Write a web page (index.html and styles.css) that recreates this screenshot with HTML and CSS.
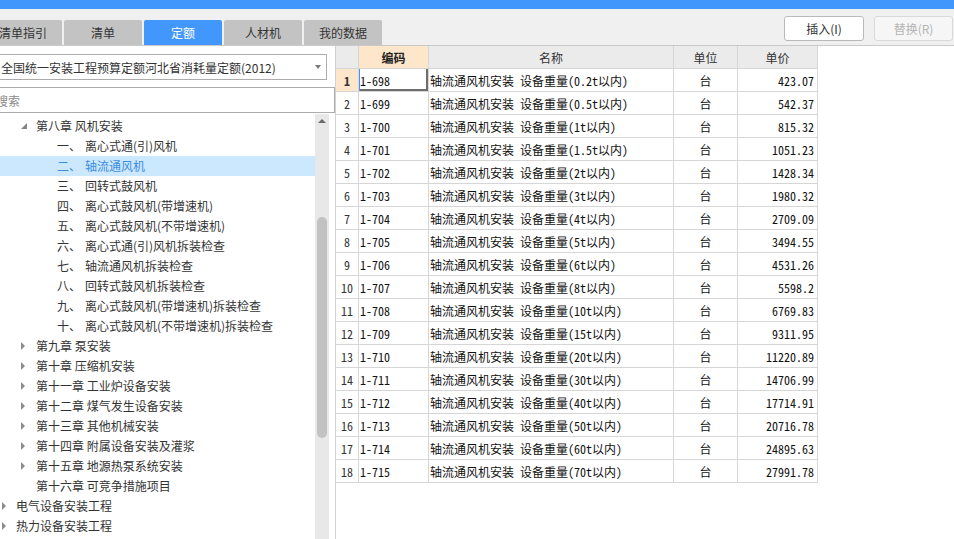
FILE: index.html
```html
<!DOCTYPE html>
<html lang="zh">
<head>
<meta charset="utf-8">
<title>定额</title>
<link rel="stylesheet" href="styles.css">
</head>
<body>
<div class="titlebar"></div>
<div class="toolbar">
  <div class="tabs">
    <div class="tab">清单指引</div>
    <div class="tab">清单</div>
    <div class="tab active">定额</div>
    <div class="tab">人材机</div>
    <div class="tab">我的数据</div>
  </div>
  <div class="actions">
    <button class="btn">插入(I)</button>
    <button class="btn disabled">替换(R)</button>
  </div>
</div>
<div class="main">
  <div class="left">
    <div class="combo"><span class="combo-text">全国统一安装工程预算定额河北省消耗量定额(2012)</span><span class="caret"></span></div>
    <input class="search" placeholder="搜索">
    <div class="treewrap">
      <div class="tree">
        <div class="node l1"><span class="exp"></span><span>第八章 风机安装</span></div>
        <div class="node l2"><span class="num">一、</span><span>离心式通(引)风机</span></div>
        <div class="node l2 sel"><span class="num">二、</span><span>轴流通风机</span></div>
        <div class="node l2"><span class="num">三、</span><span>回转式鼓风机</span></div>
        <div class="node l2"><span class="num">四、</span><span>离心式鼓风机(带增速机)</span></div>
        <div class="node l2"><span class="num">五、</span><span>离心式鼓风机(不带增速机)</span></div>
        <div class="node l2"><span class="num">六、</span><span>离心式通(引)风机拆装检查</span></div>
        <div class="node l2"><span class="num">七、</span><span>轴流通风机拆装检查</span></div>
        <div class="node l2"><span class="num">八、</span><span>回转式鼓风机拆装检查</span></div>
        <div class="node l2"><span class="num">九、</span><span>离心式鼓风机(带增速机)拆装检查</span></div>
        <div class="node l2"><span class="num">十、</span><span>离心式鼓风机(不带增速机)拆装检查</span></div>
        <div class="node l1"><span class="col"></span><span>第九章 泵安装</span></div>
        <div class="node l1"><span class="col"></span><span>第十章 压缩机安装</span></div>
        <div class="node l1"><span class="col"></span><span>第十一章 工业炉设备安装</span></div>
        <div class="node l1"><span class="col"></span><span>第十二章 煤气发生设备安装</span></div>
        <div class="node l1"><span class="col"></span><span>第十三章 其他机械安装</span></div>
        <div class="node l1"><span class="col"></span><span>第十四章 附属设备安装及灌浆</span></div>
        <div class="node l1"><span class="col"></span><span>第十五章 地源热泵系统安装</span></div>
        <div class="node l1"><span class="none"></span><span>第十六章 可竞争措施项目</span></div>
        <div class="node l0"><span class="col"></span><span>电气设备安装工程</span></div>
        <div class="node l0"><span class="col"></span><span>热力设备安装工程</span></div>
      </div>
      <div class="vscroll"><span class="up"></span><span class="thumb"></span></div>
    </div>
  </div>
  <div class="right">
    <table class="grid">
      <colgroup><col class="c-idx"><col class="c-code"><col class="c-name"><col class="c-unit"><col class="c-price"></colgroup>
      <thead>
        <tr><th class="idx"></th><th class="hl">编码</th><th>名称</th><th>单位</th><th>单价</th></tr>
      </thead>
      <tbody>
        <tr><td class="idx hl">1</td><td class="code focus">1-698</td><td>轴流通风机安装 设备重量(0.2t以内)</td><td class="unit">台</td><td class="price">423.07</td></tr>
        <tr><td class="idx">2</td><td class="code">1-699</td><td>轴流通风机安装 设备重量(0.5t以内)</td><td class="unit">台</td><td class="price">542.37</td></tr>
        <tr><td class="idx">3</td><td class="code">1-700</td><td>轴流通风机安装 设备重量(1t以内)</td><td class="unit">台</td><td class="price">815.32</td></tr>
        <tr><td class="idx">4</td><td class="code">1-701</td><td>轴流通风机安装 设备重量(1.5t以内)</td><td class="unit">台</td><td class="price">1051.23</td></tr>
        <tr><td class="idx">5</td><td class="code">1-702</td><td>轴流通风机安装 设备重量(2t以内)</td><td class="unit">台</td><td class="price">1428.34</td></tr>
        <tr><td class="idx">6</td><td class="code">1-703</td><td>轴流通风机安装 设备重量(3t以内)</td><td class="unit">台</td><td class="price">1980.32</td></tr>
        <tr><td class="idx">7</td><td class="code">1-704</td><td>轴流通风机安装 设备重量(4t以内)</td><td class="unit">台</td><td class="price">2709.09</td></tr>
        <tr><td class="idx">8</td><td class="code">1-705</td><td>轴流通风机安装 设备重量(5t以内)</td><td class="unit">台</td><td class="price">3494.55</td></tr>
        <tr><td class="idx">9</td><td class="code">1-706</td><td>轴流通风机安装 设备重量(6t以内)</td><td class="unit">台</td><td class="price">4531.26</td></tr>
        <tr><td class="idx">10</td><td class="code">1-707</td><td>轴流通风机安装 设备重量(8t以内)</td><td class="unit">台</td><td class="price">5598.2</td></tr>
        <tr><td class="idx">11</td><td class="code">1-708</td><td>轴流通风机安装 设备重量(10t以内)</td><td class="unit">台</td><td class="price">6769.83</td></tr>
        <tr><td class="idx">12</td><td class="code">1-709</td><td>轴流通风机安装 设备重量(15t以内)</td><td class="unit">台</td><td class="price">9311.95</td></tr>
        <tr><td class="idx">13</td><td class="code">1-710</td><td>轴流通风机安装 设备重量(20t以内)</td><td class="unit">台</td><td class="price">11220.89</td></tr>
        <tr><td class="idx">14</td><td class="code">1-711</td><td>轴流通风机安装 设备重量(30t以内)</td><td class="unit">台</td><td class="price">14706.99</td></tr>
        <tr><td class="idx">15</td><td class="code">1-712</td><td>轴流通风机安装 设备重量(40t以内)</td><td class="unit">台</td><td class="price">17714.91</td></tr>
        <tr><td class="idx">16</td><td class="code">1-713</td><td>轴流通风机安装 设备重量(50t以内)</td><td class="unit">台</td><td class="price">20716.78</td></tr>
        <tr><td class="idx">17</td><td class="code">1-714</td><td>轴流通风机安装 设备重量(60t以内)</td><td class="unit">台</td><td class="price">24895.63</td></tr>
        <tr><td class="idx">18</td><td class="code">1-715</td><td>轴流通风机安装 设备重量(70t以内)</td><td class="unit">台</td><td class="price">27991.78</td></tr>
      </tbody>
    </table>
  </div>
</div>
</body>
</html>
```
FILE: styles.css
```css
* { box-sizing: border-box; }
html, body {
  margin: 0;
  padding: 0;
}
body {
  width: 954px;
  height: 539px;
  overflow: hidden;
  background: #f0f0f0;
  font-family: "Noto Sans CJK SC", "Noto Sans", sans-serif;
  font-size: 12px;
  color: #333;
}
.titlebar {
  height: 9px;
  background: #4197fc;
}
.toolbar {
  height: 36px;
  display: flex;
  justify-content: space-between;
}
.tabs {
  display: flex;
  align-self: flex-end;
  gap: 2px;
  margin-left: -16px;
}
.tab {
  width: 78px;
  height: 25px;
  line-height: 25px;
  text-align: center;
  background: #c3c3c3;
  border-radius: 2px 2px 0 0;
  color: #333;
}
.tab.active {
  background: #4197fc;
  color: #fff;
}
.actions {
  display: flex;
  gap: 10px;
  margin-top: 7px;
  padding-right: 1px;
  align-self: flex-start;
}
.btn {
  width: 80px;
  height: 25px;
  padding: 0;
  font-family: inherit;
  font-size: 12px;
  color: #333;
  background: #fff;
  border: 1px solid #b9b9b9;
  border-radius: 3px;
}
.btn.disabled {
  width: 79px;
  color: #b4b4b4;
  background: #f6f6f6;
  border-color: #d9d9d9;
}
.main {
  height: 494px;
  display: flex;
  border-top: 1px solid #c9c9c9;
}
.left {
  width: 335px;
  background: #fff;
  display: flex;
  flex-direction: column;
}
.combo {
  height: 26px;
  margin: 8px 8px 0 -4px;
  padding: 0 5px 0 4px;
  border: 1px solid #acacac;
  display: flex;
  align-items: center;
  white-space: nowrap;
}
.caret {
  margin-left: auto;
  width: 0;
  height: 0;
  border-top: 4px solid #7a7a7a;
  border-left: 3px solid transparent;
  border-right: 3px solid transparent;
}
.search {
  display: block;
  height: 26px;
  width: 344px;
  margin: 7px 0 0 -9px;
  padding: 0 4px;
  border: 1px solid #acacac;
  font-family: inherit;
  font-size: 12px;
  outline: none;
}
.search::placeholder { color: #8a8a8a; }
.treewrap {
  flex: 1;
  display: flex;
  margin-top: 1px;
  min-height: 0;
}
.tree {
  flex: 1;
  padding-top: 2px;
  white-space: nowrap;
  overflow: hidden;
}
.node {
  height: 20px;
  line-height: 20px;
  display: flex;
  align-items: center;
}
.node.l0 { padding-left: 1px; }
.node.l1 { padding-left: 20px; }
.node.l2 { padding-left: 57px; }
.node.sel {
  background: #cce8ff;
  color: #3b8de0;
}
.num { width: 28px; }
.exp, .col, .none {
  width: 16px;
  height: 20px;
  position: relative;
}
.l0 .exp, .l0 .col { width: 15px; }
.exp::before {
  content: "";
  position: absolute;
  left: 1px;
  top: 7px;
  border-left: 6px solid transparent;
  border-bottom: 6px solid #858585;
}
.col::before {
  content: "";
  position: absolute;
  left: 1px;
  top: 6px;
  border-left: 4px solid #8c8c8c;
  border-top: 4px solid transparent;
  border-bottom: 4px solid transparent;
}
.vscroll {
  width: 14px;
  margin-right: 6px;
  background: #e8e8e8;
  display: flex;
  flex-direction: column;
  align-items: center;
}
.up {
  margin-top: 5px;
  width: 0;
  height: 0;
  border-bottom: 4px solid #6a6a6a;
  border-left: 4px solid transparent;
  border-right: 4px solid transparent;
}
.thumb {
  margin-top: 94px;
  width: 10px;
  height: 221px;
  background: #c2c2c2;
  border-radius: 5px;
}
.right {
  flex: 1;
  background: #fff;
  border-left: 1px solid #d2d2d2;
}
.grid {
  border-collapse: separate;
  border-spacing: 0;
  table-layout: fixed;
  width: 482px;
  font-family: "Noto Sans Mono CJK SC", "Noto Sans CJK SC", monospace;
  font-size: 12px;
  color: #111;
}
.c-idx { width: 23px; }
.c-code { width: 70px; }
.c-name { width: 245px; }
.c-unit { width: 64px; }
.c-price { width: 80px; }
.grid th, .grid td {
  height: 23px;
  padding: 0 1px;
  border-right: 1px solid #d6d6d6;
  border-bottom: 1px solid #d6d6d6;
  white-space: nowrap;
  overflow: hidden;
  text-align: left;
  font-weight: normal;
}
.grid th {
  background: #ebebeb;
  text-align: center;
  font-family: "Noto Sans CJK SC", sans-serif;
  color: #333;
}
.grid th.hl {
  background: #fde6c9;
  font-weight: bold;
  color: #222;
}
.grid td.idx {
  text-align: center;
  padding: 0;
  color: #333;
}
.grid td.idx.hl {
  background: #fde6c9;
  font-weight: bold;
}
.grid td.unit { text-align: center; }
.grid td.price { text-align: right; padding-right: 3px; }
.grid td.focus {
  box-shadow: inset 1px 0 0 #4197fc, inset -2px -2px 0 #6d6d6d;
}
```
